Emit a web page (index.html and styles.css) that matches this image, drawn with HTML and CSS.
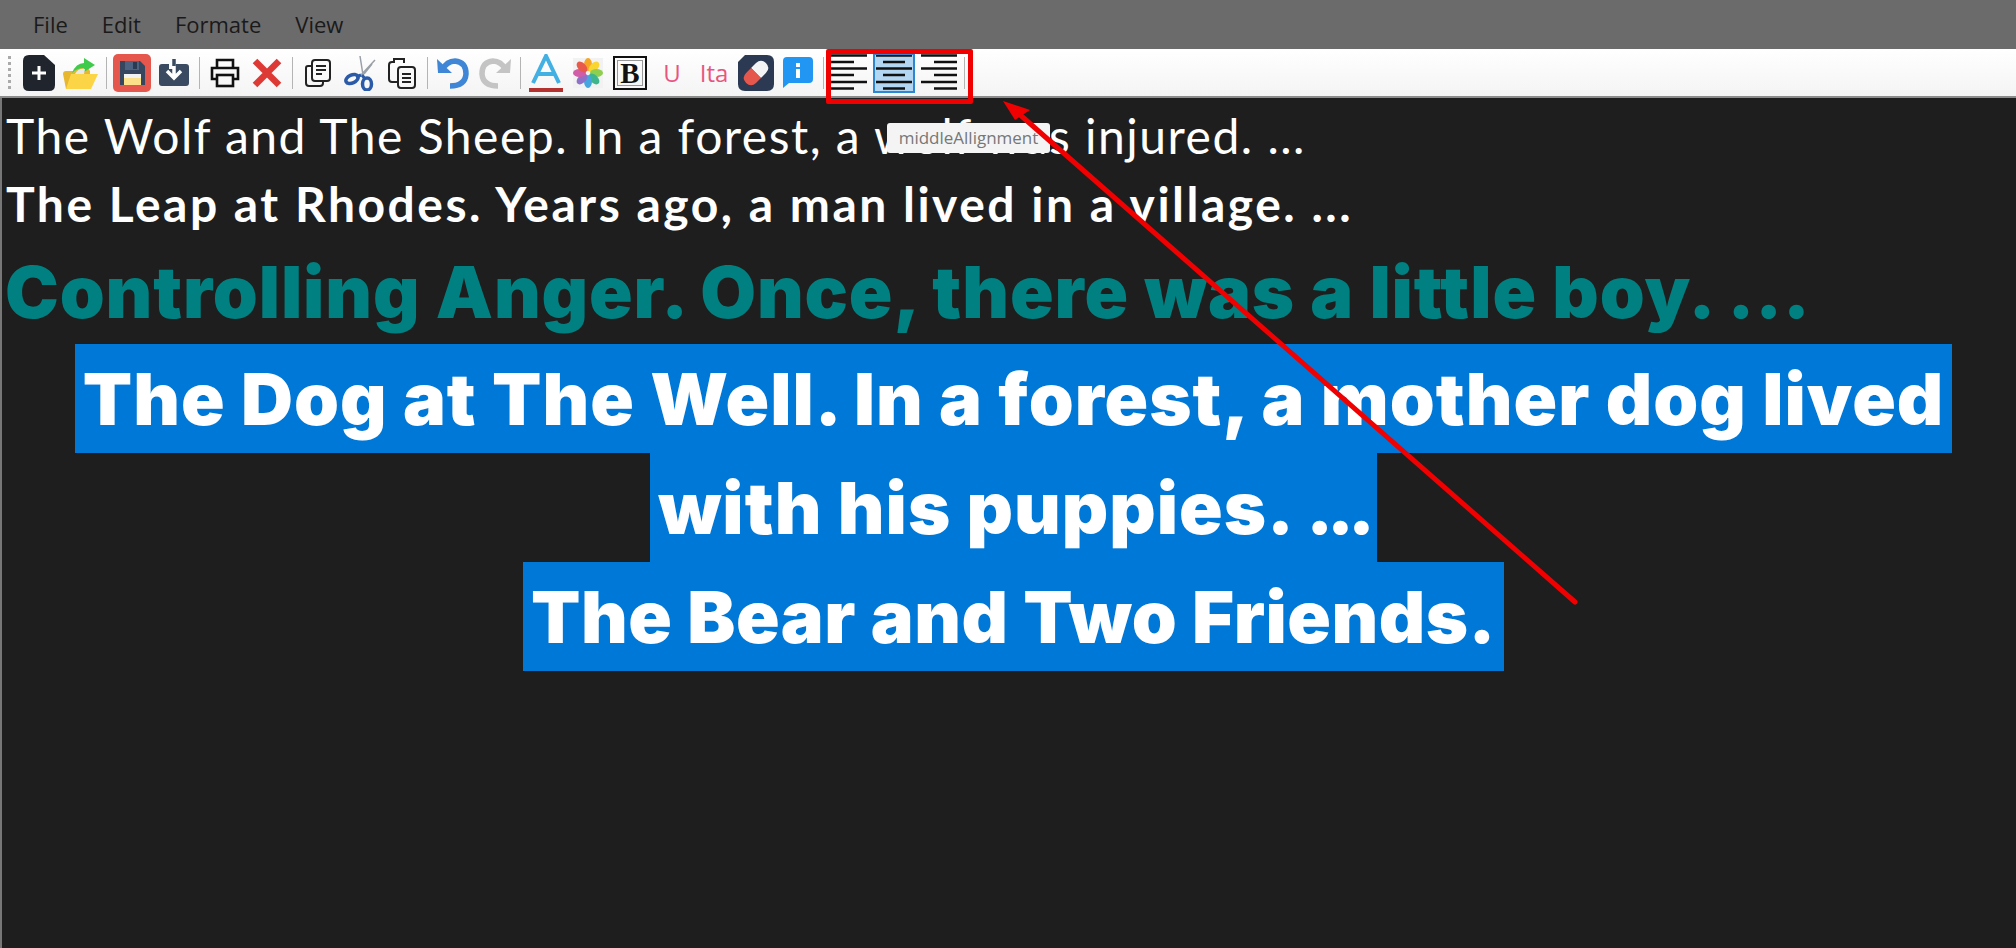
FILE: index.html
```html
<!DOCTYPE html>
<html lang="en">
<head>
    <title>Text Editor</title>
    <link rel="stylesheet" href="styles.css">
</head>
<body>
    <!-- menu -->
    <div class="menubar">
        <span>File</span>
        <span>Edit</span>
        <span>Formate</span>
        <span>View</span>
    </div>

    <!-- toolbar -->
    <div class="toolbar">
        <div class="grip"></div>
        <div class="tool"><svg width="34" height="38" viewBox="0 0 34 38"><path d="M7 1H22L33 11V31Q33 37 27 37H7Q1 37 1 31V7Q1 1 7 1Z" fill="#20242c"/><path d="M17 12V26M10 19H24" stroke="#fff" stroke-width="3"/></svg></div>
        <div class="tool"><svg width="38" height="38" viewBox="0 0 38 38"><path d="M4 35L1 20Q1 17 4 17H12L15 14H26L28 17V35Z" fill="#e8b730"/><path d="M10 19Q14 9 22 9V4L33 11L22 18V14Q15 14 10 19Z" fill="#3ecb4b"/><path d="M4 35L9 20H36L29 35Z" fill="#fbd545"/><path d="M13 20Q16 14 23 15L22 20Z" fill="#e8e8e8"/></svg></div>
        <div class="sep"></div>
        <div class="tool"><svg width="38" height="38" viewBox="0 0 38 38"><rect width="38" height="38" rx="5" fill="#e5574d"/><path d="M7 7H27L32 12V31H7Z" fill="#35465e"/><rect x="12" y="7" width="14" height="9" fill="#4d6280"/><rect x="20" y="8" width="4" height="7" fill="#2a3a50"/><rect x="11" y="20" width="17" height="11" fill="#fbe28a"/><rect x="11" y="20" width="17" height="4" fill="#f2f2f2"/></svg></div>
        <div class="tool"><svg width="32" height="30" viewBox="0 0 32 30"><path d="M4 6H11V11H16V6H28Q31 6 31 9V25Q31 28 28 28H4Q1 28 1 25V9Q1 6 4 6Z" fill="#3a4a60"/><path d="M16 1V19M9 13L16 20L23 13" fill="none" stroke="#fff" stroke-width="3.5"/><path d="M16 1V8" stroke="#3a4a60" stroke-width="3.5"/></svg></div>
        <div class="sep"></div>
        <div class="tool"><svg width="30" height="30" viewBox="0 0 30 30" fill="none" stroke="#111" stroke-width="2.6"><path d="M7 10V2H23V10"/><path d="M7 21H2V10H28V21H23"/><rect x="7" y="17" width="16" height="11"/></svg></div>
        <div class="tool"><svg width="30" height="30" viewBox="0 0 30 30"><path d="M3 3L27 27M27 3L3 27" stroke="#dd3a36" stroke-width="6.5"/></svg></div>
        <div class="sep"></div>
        <div class="tool"><svg width="26" height="28" viewBox="0 0 26 28" fill="none" stroke="#222" stroke-width="2"><path d="M6 7H3Q1 7 1 9V24Q1 27 4 27H15Q18 27 18 24V22"/><rect x="7" y="1" width="18" height="21" rx="3"/><path d="M11 7H21M11 11H21M11 15H17"/></svg></div>
        <div class="tool"><svg width="32" height="36" viewBox="0 0 32 36" fill="none"><path d="M19 20L16 1M17 20L31 5M20 19L28 9" stroke="#9aa0a8" stroke-width="1.5"/><path d="M17 20L12 22" stroke="#2a5aa8" stroke-width="3"/><ellipse cx="8" cy="24" rx="6.5" ry="4" stroke="#2a5aa8" stroke-width="3.5" transform="rotate(-25 8 24)"/><ellipse cx="23" cy="29" rx="4.5" ry="6" stroke="#2a5aa8" stroke-width="3.5"/><path d="M18 20L21 24" stroke="#2a5aa8" stroke-width="3"/></svg></div>
        <div class="tool"><svg width="28" height="32" viewBox="0 0 28 32" fill="none" stroke="#222" stroke-width="2"><path d="M7 5H4Q1 5 1 8V22Q1 25 4 25H9"/><path d="M6 6V2H16V6"/><rect x="10" y="10" width="17" height="21" rx="3"/><path d="M14 17H23M14 21H23M14 25H23"/></svg></div>
        <div class="sep"></div>
        <div class="tool"><svg width="32" height="32" viewBox="0 0 32 32" fill="none"><path d="M5 13Q10 4 18 4Q29 5 29 17Q28 29 13 29" stroke="#3f86d6" stroke-width="5.5"/><path d="M0 2L15 16H1Z" fill="#3f86d6"/></svg></div>
        <div class="tool"><svg width="32" height="32" viewBox="0 0 32 32" fill="none"><path d="M27 13Q22 4 14 4Q3 5 3 17Q4 29 19 29" stroke="#c4c4c4" stroke-width="5.5"/><path d="M32 2L17 16H31Z" fill="#c4c4c4"/></svg></div>
        <div class="sep"></div>
        <div class="tool"><svg width="34" height="38" viewBox="0 0 34 38"><path d="M4 29L17 2L30 29M9 20H25" fill="none" stroke="#43b0e4" stroke-width="4"/><rect y="34" width="34" height="4" fill="#b3322f"/></svg></div>
        <div class="tool"><svg width="30" height="30" viewBox="0 0 30 30"><rect width="30" height="30" fill="#f2f2f2"/><g transform="translate(15 15)"><ellipse cy="-8.500" rx="4" ry="6.500" fill="#f6a623"/><ellipse cy="-8.500" rx="4" ry="6.500" fill="#f8d530" transform="rotate(45)"/><ellipse cy="-8.500" rx="4" ry="6.500" fill="#8fcf4f" transform="rotate(90)"/><ellipse cy="-8.500" rx="4" ry="6.500" fill="#3fb58e" transform="rotate(135)"/><ellipse cy="-8.500" rx="4" ry="6.500" fill="#46a6e0" transform="rotate(180)"/><ellipse cy="-8.500" rx="4" ry="6.500" fill="#8f72c8" transform="rotate(225)"/><ellipse cy="-8.500" rx="4" ry="6.500" fill="#d15ca8" transform="rotate(270)"/><ellipse cy="-8.500" rx="4" ry="6.500" fill="#e85a4a" transform="rotate(315)"/></g></svg></div>
        <div class="tool"><div class="bold-icon">B</div></div>
        <div class="tool"><span class="pink-icon">U</span></div>
        <div class="tool"><span class="pink-icon">Ita</span></div>
        <div class="tool"><svg width="36" height="36" viewBox="0 0 36 36"><path d="M7 0H29Q36 0 36 7V29Q36 36 29 36H7Q0 36 0 29V7Z" fill="#2b3a52"/><g transform="rotate(45 18 18)"><path d="M11 11Q11 4 18 4Q25 4 25 11V18H11Z" fill="#f4f4f4"/><path d="M11 18H25V25Q25 32 18 32Q11 32 11 25Z" fill="#e5574d"/></g></svg></div>
        <div class="tool"><svg width="30" height="31" viewBox="0 0 30 31"><path d="M4 0H26Q30 0 30 4V22Q30 26 26 26H6L0 31V4Q0 0 4 0Z" fill="#2196f3"/><rect x="13" y="6" width="4" height="4" fill="#fff"/><rect x="13" y="12" width="4" height="9" fill="#fff"/></svg></div>
        <div class="sep"></div>
        <div class="tool tool-align"><svg width="36" height="38" viewBox="0 0 36 38" stroke="#111" stroke-width="2.500"><path d="M0 1.500H36M0 8H23M0 14.500H36M0 21H23M0 28H36M0 34.500H23"/></svg></div>
        <div class="tool tool-align tool-on"><svg width="36" height="38" viewBox="0 0 36 38" stroke="#111" stroke-width="2.500"><path d="M0 1.500H36M7 8H29M0 14.500H36M7 21H29M0 28H36M7 34.500H29"/></svg></div>
        <div class="tool tool-align"><svg width="36" height="38" viewBox="0 0 36 38" stroke="#111" stroke-width="2.500"><path d="M0 1.500H36M13 8H36M0 14.500H36M13 21H36M0 28H36M13 34.500H36"/></svg></div>
        <div class="sep"></div>
    </div>

    <!-- editor text -->
    <div class="editor">
        <div class="line line-thin">The Wolf and The Sheep. In a forest, a wolf was injured. ...</div>
        <div class="line line-comic">The Leap at Rhodes. Years ago, a man lived in a village. ...</div>
        <div class="line line-teal">Controlling Anger. Once, there was a little boy. ...</div>
        <div class="sel-group">
            <div class="sel">The Dog at The Well. In a forest, a mother dog lived</div>
            <div class="sel">with his puppies. <span class="dots">...</span></div>
            <div class="sel sel-short">The Bear and Two Friends.</div>
        </div>
    </div>

    <!-- annotations over the window -->
    <div class="mark-box"></div>
    <div class="tip">middleAllignment</div>
    <svg class="arrow" width="2016" height="948" viewBox="0 0 2016 948">
        <path d="M1575 602L1018 113" stroke="#f00000" stroke-width="5" stroke-linecap="round"/>
        <path d="M1003 101L1030 110L1015 120Z" fill="#f00000"/>
    </svg>
</body>
</html>
```

FILE: styles.css
```css
html, body {
    margin: 0;
    padding: 0;
    height: 100%;
    overflow: hidden;
}
body {
    position: relative;
    display: flex;
    flex-direction: column;
    background-color: #1e1e1e;
}
.menubar {
    height: 47px;
    padding-bottom: 2px;
    flex-shrink: 0;
    display: flex;
    align-items: center;
    gap: 34px;
    padding-left: 33px;
    background-color: #6b6b6b;
    color: #1a1a1a;
    font-family: "Open Sans", sans-serif;
    font-size: 22px;
}
.toolbar {
    height: 47px;
    flex-shrink: 0;
    display: flex;
    align-items: center;
    padding-left: 8px;
    background: linear-gradient(#ffffff, #f4f4f4);
    border-bottom: 2px solid #8c8c8c;
}
.grip {
    width: 3px;
    height: 34px;
    margin-right: 7px;
    background: repeating-linear-gradient(#aaa 0, #aaa 3px, transparent 3px, transparent 6px);
}
.tool {
    width: 42px;
    height: 42px;
    flex-shrink: 0;
    display: flex;
    align-items: center;
    justify-content: center;
    box-sizing: border-box;
}
.tool-align {
    height: 40px;
    overflow: hidden;
}
.tool-align + .tool-align {
    margin-left: 3px;
}
.tool-on {
    background-color: #b3d7f3;
    border: 2px solid #2e86d0;
}
.sep {
    width: 1px;
    height: 32px;
    margin: 0 4px;
    background-color: #b4b4b4;
}
.bold-icon {
    width: 34px;
    height: 34px;
    box-sizing: border-box;
    border: 2px solid #111;
    outline: 1px solid #999;
    outline-offset: -5px;
    text-align: center;
    color: #111;
    font-family: "Liberation Serif", serif;
    font-weight: bold;
    font-size: 29px;
    line-height: 30px;
}
.pink-icon {
    color: #e9547f;
    font-family: "Open Sans", sans-serif;
    font-size: 24px;
}
.editor {
    flex: 1;
    border-left: 2px solid #777;
    color: #fff;
}
.line {
    padding-left: 4px;
    white-space: nowrap;
}
.line-thin {
    height: 72px;
    font-family: "Lato", sans-serif;
    font-size: 48px;
    line-height: 76px;
    letter-spacing: 1.5px;
}
.line-comic {
    height: 72px;
    font-family: "Lato", sans-serif;
    font-weight: bold;
    font-size: 48px;
    line-height: 68px;
    letter-spacing: 2.5px;
}
.line-teal {
    height: 102px;
    padding-left: 3px;
    color: #008080;
    font-family: "Inter", sans-serif;
    font-weight: 900;
    font-size: 72px;
    line-height: 100px;
    letter-spacing: 0.9px;
}
.sel-group {
    padding-left: 9px;
}
.sel {
    width: fit-content;
    margin: 0 auto;
    padding: 0 8px;
    background-color: #0078d7;
    font-family: "Inter", sans-serif;
    font-weight: 900;
    font-size: 72px;
    line-height: 109px;
    letter-spacing: 1px;
    white-space: nowrap;
}
.sel-short {
    letter-spacing: 0.5px;
}
.dots {
    letter-spacing: -6px;
}
.mark-box {
    position: absolute;
    left: 826px;
    top: 49px;
    width: 137px;
    height: 45px;
    border: 5px solid #f00000;
    border-radius: 2px;
}
.tip {
    position: absolute;
    left: 887px;
    top: 123px;
    width: 163px;
    height: 30px;
    border-radius: 3px;
    background-color: #f4f4f4;
    color: #777;
    font-family: "Open Sans", sans-serif;
    font-size: 17px;
    line-height: 30px;
    text-align: center;
}
.arrow {
    position: absolute;
    left: 0;
    top: 0;
}
```
